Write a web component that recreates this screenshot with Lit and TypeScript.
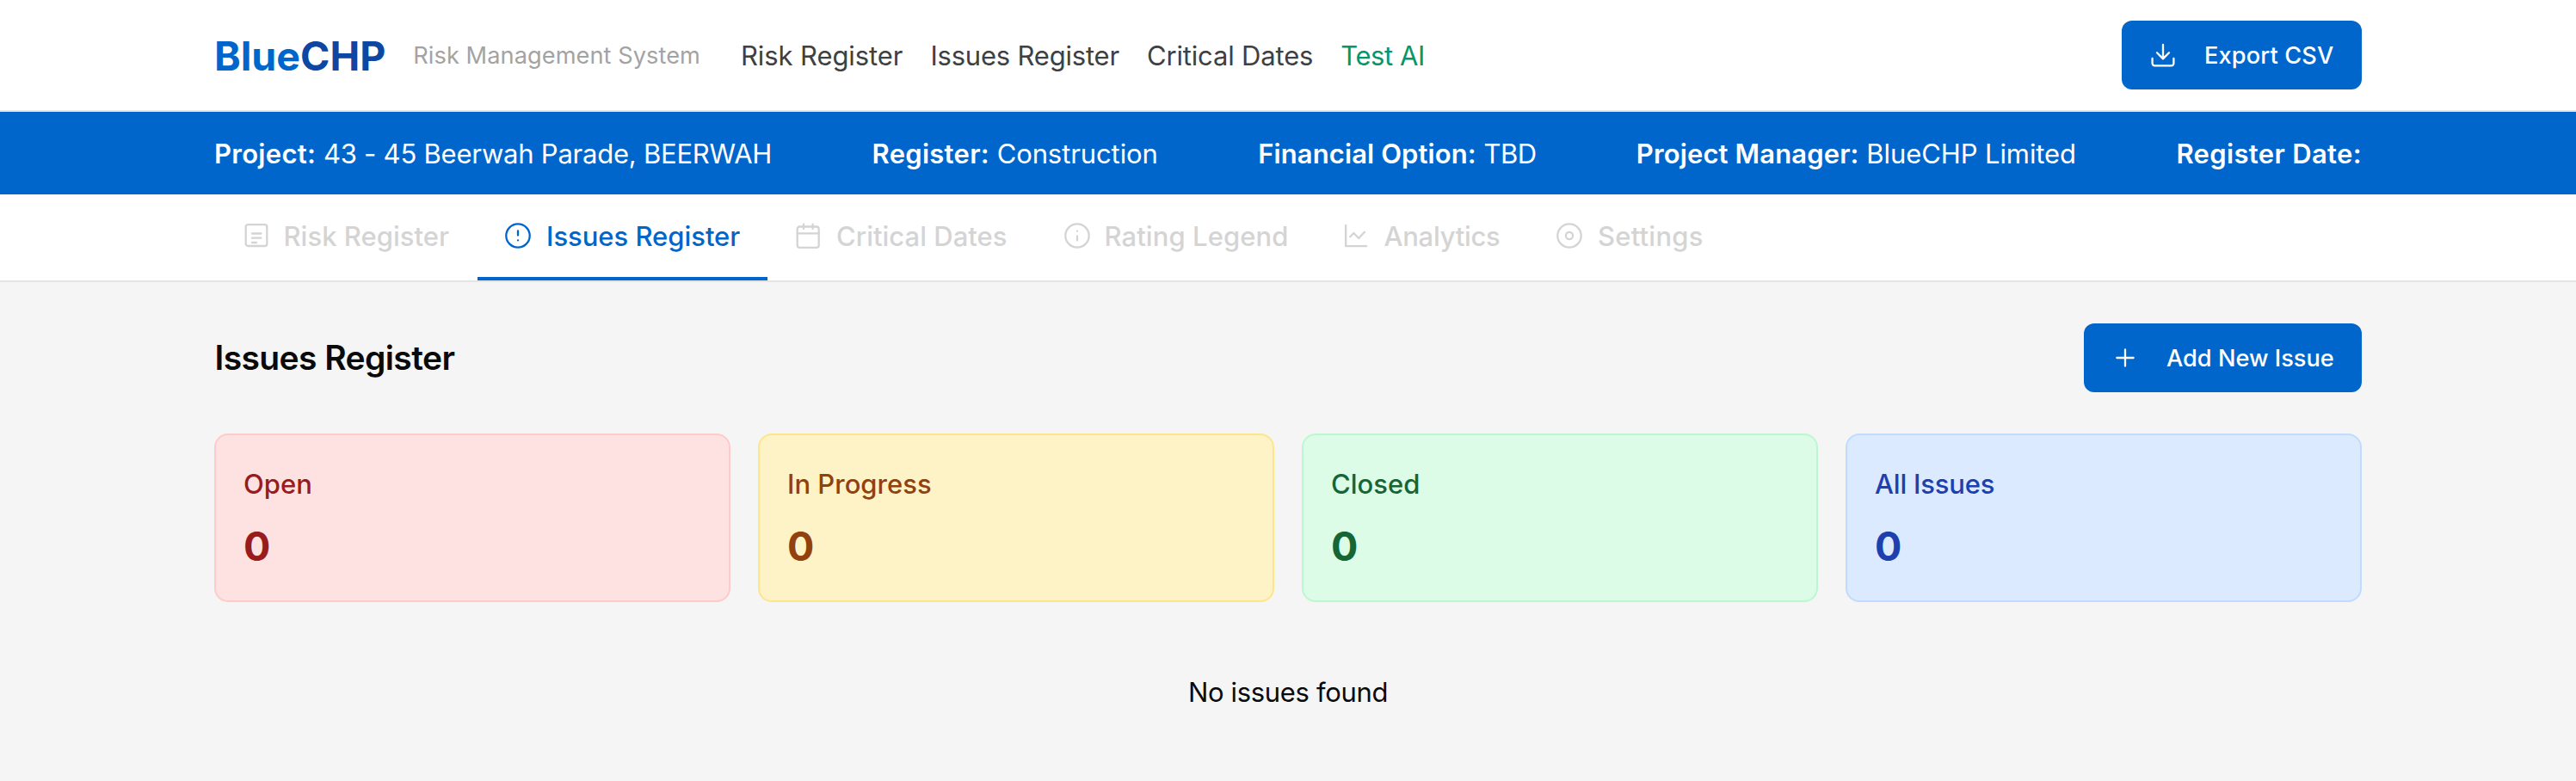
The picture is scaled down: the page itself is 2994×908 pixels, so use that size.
import { LitElement, html, svg, css } from 'lit';
import { customElement } from 'lit/decorators.js';

const ring = svg`<circle cx="15" cy="15" r="13.7" />`;

const icons = {
  list: svg`<rect x="2.7" y="2.2" width="24.6" height="24.8" rx="2.6" /><path d="M10 12.5H20.4M10 17.7H20.4M10 23H15" />`,
  alert: svg`${ring}<path d="M15 9.4V14.6M15 20.3V20.4" />`,
  calendar: svg`<rect x="2.7" y="4.5" width="25" height="24.4" rx="2.8" /><path d="M10 1.7V7M20.6 1.7V7M2.7 12.3H27.7" />`,
  info: svg`${ring}<path d="M15 15.4V20.6M15 9.7V9.8" />`,
  chart: svg`<path d="M2.2 3V27.2H26.2M7.2 16.2L11.4 12L17.2 18L24 10.8" />`,
  target: svg`${ring}<circle cx="15" cy="15" r="4.1" />`,
  download: svg`<path d="M15 2.8V19.2M8 12.2L15 19.4L22 12.2M2.6 19V24.6A2.8 2.8 0 0 0 5.4 27.4H24.6A2.8 2.8 0 0 0 27.4 24.6V19" />`,
  plus: svg`<path d="M15 5.4V24.6M5.4 15H24.6" />`,
};

const icon = (name: keyof typeof icons) =>
  html`<svg class="icon" viewBox="0 0 30 30" aria-hidden="true">${icons[name]}</svg>`;

const meta = [
  { label: 'Project:', value: '43 - 45 Beerwah Parade, BEERWAH', l: 0.29, v: -0.23 },
  { label: 'Register:', value: 'Construction', l: 0.28, v: -0.1 },
  { label: 'Financial Option:', value: 'TBD', l: 0.1, v: -0.6 },
  { label: 'Project Manager:', value: 'BlueCHP Limited', l: 0.12, v: -0.09 },
  { label: 'Register Date:', value: '', l: 0.34, v: 0 },
];

const tabs: { icon: keyof typeof icons; label: string; t: number; active?: boolean; wide?: boolean }[] = [
  { icon: 'list', label: 'Risk Register', t: 0.03 },
  { icon: 'alert', label: 'Issues Register', t: -0.03, active: true, wide: true },
  { icon: 'calendar', label: 'Critical Dates', t: 0.01, wide: true },
  { icon: 'info', label: 'Rating Legend', t: 0.08 },
  { icon: 'chart', label: 'Analytics', t: -0.28 },
  { icon: 'target', label: 'Settings', t: 0.22, wide: true },
];

const cards = [
  { tone: 'red', label: 'Open' },
  { tone: 'amber', label: 'In Progress' },
  { tone: 'green', label: 'Closed' },
  { tone: 'blue', label: 'All Issues' },
];

@customElement('app-root')
export class AppRoot extends LitElement {
  static styles = css`
    :host {
      display: block;
      min-height: 908px;
      background: #f5f5f5;
      color: #0a0a0a;
      font: 400 31px/48px Inter, 'Liberation Sans', sans-serif;
      white-space: nowrap;
    }
    * { box-sizing: border-box; }
    .wrap { width: 2496px; margin: 0 auto; }
    .icon {
      flex: none;
      width: 30px;
      height: 30px;
      fill: none;
      stroke: currentColor;
      stroke-width: 2.3;
      stroke-linecap: round;
      stroke-linejoin: round;
    }
    header { height: 130px; background: #fff; border-bottom: 2px solid #e5e5e5; }
    .top { display: flex; align-items: center; height: 128px; }
    .logo { padding-top: 2px; font-size: 46.5px; line-height: 64px; font-weight: 700; color: #0066cc; }
    .logo span { color: #0d47a1; }
    .tagline {
      margin: 0 47px 0 32px;
      padding-top: 1px;
      font-size: 27.2px;
      line-height: 40px;
      letter-spacing: 0.06px;
      color: #a3a3a3;
    }
    nav { display: flex; gap: 32px; padding-top: 1px; color: #404040; }
    .n1 { letter-spacing: -0.09px; }
    .n2 { letter-spacing: -0.2px; }
    .n3 { letter-spacing: -0.17px; }
    .n4 { letter-spacing: -0.4px; color: #059669; }
    button {
      display: flex;
      align-items: center;
      gap: 33px;
      height: 80px;
      margin: 0 0 0 auto;
      padding: 0 0 0 33px;
      border: 0;
      border-radius: 12px;
      background: #0066cc;
      color: #fff;
      font: 500 27.2px/40px Inter, 'Liberation Sans', sans-serif;
    }
    button span { padding-top: 1px; }
    .export { width: 279px; letter-spacing: 0.13px; }
    .add { width: 323px; }
    .meta { background: #0066cc; color: #fff; }
    .meta .wrap { display: flex; justify-content: space-between; align-items: center; height: 96px; padding-top: 1px; }
    .meta b { font-weight: 600; }
    .tabs { background: #fff; border-bottom: 2px solid #e5e5e5; }
    .tabs .wrap {
      display: grid;
      grid-template-columns: 304px 337px 313px 325px 247px 290px;
      height: 100px;
      padding-left: 2px;
    }
    .tab {
      display: flex;
      align-items: center;
      gap: 16.5px;
      padding-left: 32px;
      border-bottom: 4px solid transparent;
      font-weight: 500;
      color: #d4d4d4;
    }
    .tab.wide { gap: 18px; }
    .tab span { padding-top: 1px; }
    .tab.active { color: #0066cc; border-color: #0066cc; }
    .head { display: flex; align-items: center; height: 80px; margin-top: 48px; }
    h1 { margin: 0; padding: 0 0 1px 0.5px; font-size: 39px; line-height: 56px; font-weight: 600; letter-spacing: -0.6px; }
    .cards { display: grid; grid-template-columns: repeat(4, 1fr); gap: 32px; margin-top: 48px; }
    .card { height: 196px; padding: 32.5px 32px 0; border: 2px solid; border-radius: 16px; }
    .label { font-weight: 500; }
    .count { margin-top: 16.5px; font-size: 46.5px; line-height: 64px; font-weight: 700; }
    .red { background: #fee2e2; border-color: #fecaca; color: #991b1b; }
    .amber { background: #fef3c7; border-color: #fde68a; color: #92400e; }
    .green { background: #dcfce7; border-color: #bbf7d0; color: #166534; }
    .blue { background: #dbeafe; border-color: #bfdbfe; color: #1e40af; }
    .blue .label { letter-spacing: -0.2px; }
    .empty { padding-top: 80.5px; text-align: center; letter-spacing: -0.33px; }
  `;

  render() {
    return html`
      <header>
        <div class="wrap top">
          <div class="logo">Blue<span>CHP</span></div>
          <div class="tagline">Risk Management System</div>
          <nav>
            <a class="n1">Risk Register</a>
            <a class="n2">Issues Register</a>
            <a class="n3">Critical Dates</a>
            <a class="n4">Test AI</a>
          </nav>
          <button class="export">${icon('download')}<span>Export CSV</span></button>
        </div>
      </header>
      <section class="meta">
        <div class="wrap">
          ${meta.map((m) => html`<div><b style="letter-spacing:${m.l}px">${m.label}</b> <span style="letter-spacing:${m.v}px">${m.value}</span></div>`)}
        </div>
      </section>
      <section class="tabs">
        <div class="wrap">
          ${tabs.map((t) => html`<div class="tab ${t.active ? 'active' : ''} ${t.wide ? 'wide' : ''}">${icon(t.icon)}<span style="letter-spacing:${t.t}px">${t.label}</span></div>`)}
        </div>
      </section>
      <main class="wrap">
        <div class="head">
          <h1>Issues Register</h1>
          <button class="add">${icon('plus')}<span>Add New Issue</span></button>
        </div>
        <div class="cards">
          ${cards.map((c) => html`<div class="card ${c.tone}"><div class="label">${c.label}</div><div class="count">0</div></div>`)}
        </div>
        <div class="empty">No issues found</div>
      </main>
    `;
  }
}
